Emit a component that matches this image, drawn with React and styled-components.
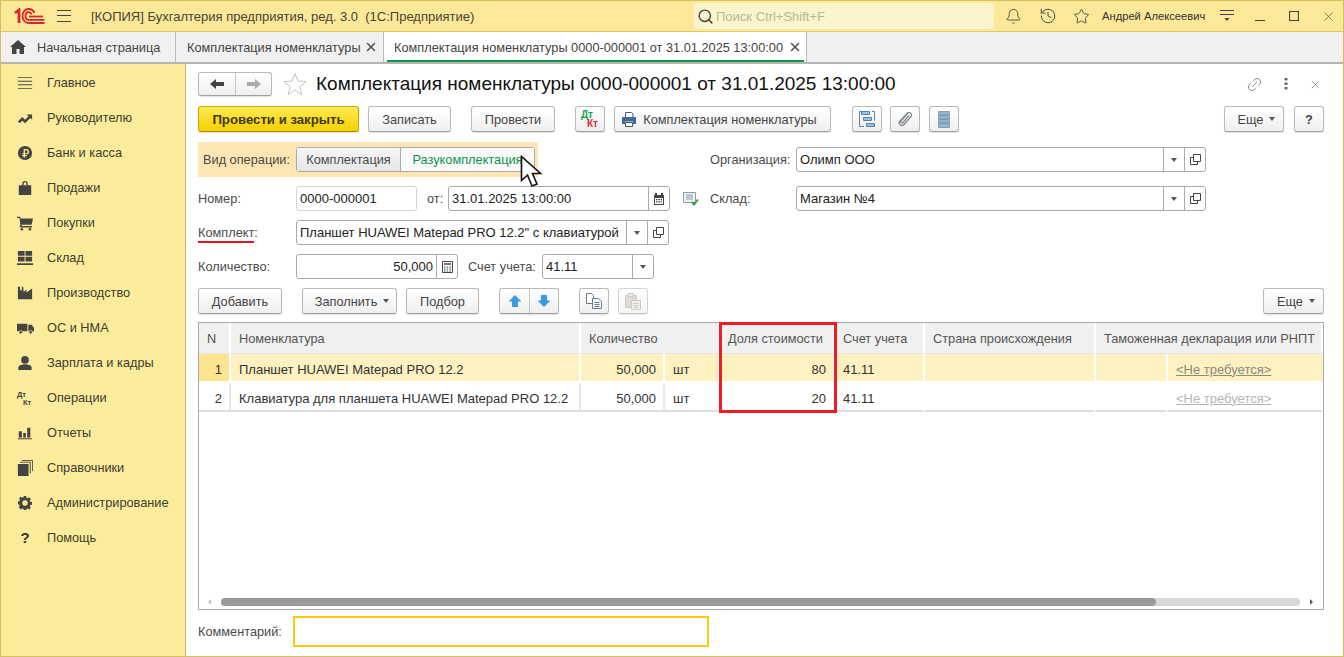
import React from 'react'
import styled, { createGlobalStyle } from 'styled-components'
import { Bell, History, Star, Link2, X, Search } from 'lucide-react'

const GlobalStyle = createGlobalStyle`
  html, body { margin: 0; padding: 0; overflow: hidden; }
  body { font-family: "Liberation Sans", Arial, sans-serif; font-size: 12.75px; color: #333; }
  * { box-sizing: border-box; }
`

const Win = styled.div`
  width: 1344px; height: 657px; display: flex; flex-direction: column;
  border: 1px solid #d6c05c; border-top: 0; background: #fff; position: relative; overflow: hidden;
`
const TitleBar = styled.div`
  height: 32px; flex: none; background: #fbe999; display: flex; align-items: center;
  border-top: 1px solid #d6c05c; border-bottom: 1px solid #dcc96c; position: relative;
`
const LogoBox = styled.div` margin-left: 13px; width: 31px; height: 16px; display: flex; `
const Burger = styled.div`
  margin-left: 12px; width: 14px; height: 12px;
  border-top: 1px solid #444; border-bottom: 1px solid #444; position: relative;
  &::after { content: ""; position: absolute; left: 0; right: 0; top: 4px; height: 1px; background: #444; }
`
const AppTitle = styled.div` margin-left: 20px; width: 603px; font-size: 13px; color: #4b4232; white-space: pre; `
const SearchBox = styled.div`
  width: 300px; height: 26px; background: #fcf4cb; border-radius: 3px; display: flex; align-items: center;
  padding-left: 3px; gap: 2px; color: #bbb59a; font-size: 13px;
`
const TopIcon = styled.div`
  width: ${p => p.$w || 34}px; display: flex; justify-content: center; color: #4a4a44; flex: none;
`
const UserName = styled.div` font-size: 11.2px; color: #333; margin-left: 3px; width: 103px; white-space: nowrap; flex: none; `
const TabBar = styled.div`
  height: 32px; flex: none; background: #f0f0f0; display: flex; border-bottom: 2px solid #b5b5b5;
`
const Tab = styled.div`
  width: ${p => p.$w}px; flex: none; display: flex; align-items: center; padding-left: ${p => p.$pad}px;
  border-right: 1px solid #bdbdbd; background: ${p => p.$active ? '#fff' : 'transparent'};
  color: #444; position: relative; white-space: nowrap;
  ${p => p.$active && `&::after { content: ""; position: absolute; left: 3px; right: 2px; bottom: 0; height: 2px; background: #10934a; }`}
`
const TabClose = styled.span` position: absolute; right: ${p => p.$r}px; top: 8px; display: flex; color: #555; `
const Body = styled.div` flex: 1; display: flex; min-height: 0; `
const Sidebar = styled.nav`
  width: 185px; flex: none; background: #fbec9b; border-right: 1px solid #c8b765; padding-top: 1px;
`
const NavItem = styled.div`
  height: 35px; display: flex; align-items: center; color: #403c30;
`
const NavIcon = styled.div` width: 46px; display: flex; justify-content: center; padding-left: 2px; color: #444; flex: none; `
const Content = styled.main`
  flex: 1; position: relative; padding: 8px 19px 0 12px; display: flex; flex-direction: column; min-width: 0;
`
const Header = styled.div` height: 24px; display: flex; align-items: center; `
const Title = styled.h1` margin: 0 0 0 9px; font-weight: 400; font-size: 19px; color: #111; white-space: nowrap; flex: 1; `
const BtnGroup = styled.div`
  display: flex; height: ${p => p.$h || 26}px; border: 1px solid #b9b9b9; border-bottom-color: #a0a0a0; border-radius: 3px;
  background: linear-gradient(#fff, #efefef); box-shadow: 0 1px 1px rgba(0,0,0,.12); flex: none;
  margin-left: ${p => p.$ml || 0}px;
`
const GroupCell = styled.div`
  width: ${p => p.$w}px; display: flex; align-items: center; justify-content: center;
  & + & { border-left: 1px solid #c6c6c6; }
`
const Toolbar = styled.div` display: flex; height: 26px; margin-top: ${p => p.$mt}px; flex: none; `
const Btn = styled.div`
  width: ${p => p.$w}px; height: 26px; flex: none; margin-left: ${p => p.$ml || 0}px;
  padding: 0 ${p => p.$pr || 0}px 0 ${p => p.$pl || 0}px;
  display: flex; align-items: center; justify-content: center; gap: 6px; white-space: nowrap;
  border: 1px solid ${p => p.$primary ? '#c9a800' : '#b9b9b9'}; border-bottom-color: ${p => p.$primary ? '#a88c00' : '#a0a0a0'}; border-radius: 3px;
  background: ${p => p.$primary ? 'linear-gradient(#ffea55, #f5d000)' : 'linear-gradient(#fff, #efefef)'};
  box-shadow: 0 1px 1px rgba(0,0,0,.12); color: ${p => p.$primary ? '#3f3a10' : '#444'};
  font-weight: ${p => p.$primary ? 700 : 400};
  font-size: ${p => p.$primary ? '13.2px' : 'inherit'};
  opacity: ${p => p.$off ? .6 : 1};
`
const Caret = styled.span`
  display: inline-block; width: 0; height: 0; border: 3px solid transparent; border-top: 4px solid #555; border-bottom: 0;
`
const Row = styled.div` display: flex; align-items: center; height: 25px; margin-top: ${p => p.$mt}px; flex: none; `
const LeftCol = styled.div` width: 512px; display: flex; align-items: center; flex: none; height: 100%; `
const Label = styled.span`
  width: ${p => p.$w || 98}px; flex: none; color: #4a4a4a; white-space: nowrap; margin-left: ${p => p.$ml || 0}px;
`
const RedLabel = styled(Label)`
  span { border-bottom: 2px solid #e8141c; padding-bottom: 1px; }
`
const Field = styled.div`
  width: ${p => p.$w}px; height: 25px; flex: none; display: flex; border: 1px solid ${p => p.$soft ? '#d4d4d4' : '#aaa'}; border-radius: 3px;
  background: #fff; color: #222; font-size: 13px;
`
const FieldText = styled.div`
  flex: 1; padding: 0 3px; display: flex; align-items: center; white-space: nowrap; min-width: 0; overflow: hidden;
  justify-content: ${p => p.$right ? 'flex-end' : 'flex-start'};
`
const FieldBtn = styled.div`
  width: 21px; flex: none; border-left: 1px solid #aaa; display: flex; align-items: center; justify-content: center; color: #444;
`
const Highlight = styled.div`
  margin-top: 10px; height: 35px; width: 340px; background: #fde5b4; display: flex; align-items: center;
  padding-left: 5px; flex: none;
`
const TopRow = styled.div` display: flex; align-items: flex-start; flex: none; `
const OrgWrap = styled.div` display: flex; align-items: center; margin: 15px 0 0 172px; `
const Toggle = styled.div`
  width: 239px; height: 25px; display: flex; border: 1px solid #aaa; border-radius: 3px; margin-left: 5px;
  background: linear-gradient(#fff, #f1f1f1);
`
const ToggleCell = styled.div`
  display: flex; align-items: center; justify-content: center; width: ${p => p.$w}px;
  color: ${p => p.$on ? '#0b9250' : '#4a4a4a'}; background: ${p => p.$on ? '#fafafa' : 'linear-gradient(#f6f6f6, #e6e6e6)'};
  & + & { border-left: 1px solid #aaa; }
`
const TableBox = styled.div`
  margin-top: 8px; height: 288px; flex: none; border: 1px solid #a8a8a8; position: relative; background: #fff;
  display: flex; flex-direction: column;
`
const Grid = styled.div`
  display: grid; grid-template-columns: 32px 350px 84px 55px 115px 90px 171px 72px 1fr; grid-auto-rows: auto;
`
const Head = styled.div`
  grid-column: span ${p => p.$span || 1}; height: 31px; background: #f0f0f0; border-right: 2px solid #fff; border-bottom: 1px solid #e4e4e4;
  display: flex; align-items: center; padding-left: 8px; color: #555; white-space: nowrap; overflow: hidden;
`
const Cell = styled.div`
  height: 29px; display: flex; align-items: center; padding: 3px ${p => p.$right ? 7 : 8}px 0 8px; white-space: nowrap; color: #333; font-size: 13px;
  background: ${p => p.$num && p.$sel ? '#ffe48f' : p.$sel ? '#fdf1c2' : '#fff'};
  border-right: 2px solid ${p => p.$line ? (p.$sel ? '#fff' : '#e6e6e6') : 'transparent'};
  border-bottom: 2px solid ${p => p.$sel ? '#fff' : '#dedede'};
  justify-content: ${p => p.$right ? 'flex-end' : 'flex-start'};
`
const NotNeeded = styled.a`
  color: ${p => p.$sel ? '#8a8a80' : '#b5b5b5'}; text-decoration: underline;
`
const ScrollRow = styled.div`
  margin-top: auto; height: 14px; display: flex; align-items: center; padding: 0 10px 0 9px; gap: 10px; flex: none;
`
const Track = styled.div` flex: 1; height: 8px; border-radius: 4px; background: #d8d8d8; display: flex; `
const Thumb = styled.div` width: 935px; height: 8px; border-radius: 4px; background: #9a9a9a; `
const ScrollArrow = styled.span`
  width: 0; height: 0; border: 3px solid transparent;
  ${p => p.$dir === 'l' ? 'border-right: 3px solid #c4c4c4; border-left: 0;' : 'border-left: 3px solid #555; border-right: 0;'}
`
const CommentRow = styled.div` display: flex; align-items: center; margin-top: 6px; flex: none; `
const CommentBox = styled.div` width: 416px; height: 31px; border: 2px solid #fdc912; `
const RedFrame = styled.div`
  position: absolute; left: 533px; top: 258px; width: 118px; height: 91px; border: 3px solid #ee1c25; pointer-events: none;
`
const Cursor = styled.svg` position: absolute; left: 334px; top: 91px; pointer-events: none; `

const DarkIcon = ({ children, size = 16 }) => (
  <svg width={size} height={size} viewBox="0 0 18 18" fill="#444">{children}</svg>
)

const navItems = [
  ['Главное', <DarkIcon><path d="M1 2.500h16v1H1zM1 6.500h16v1H1zM1 10.500h16v1H1zM1 14.500h16v1H1z" /></DarkIcon>],
  ['Руководителю', <DarkIcon><path d="M1 13l5-5 3 3 4-4-2-2h6v6l-2-2-6 6-3-3-3 3z" /></DarkIcon>],
  ['Банк и касса', <DarkIcon size={16}><circle cx="9" cy="9" r="8" /><path d="M7.500 4.500h3a2.500 2.500 0 010 6H9v.8h2v1.300H9V14H7.500v-1.400H6v-1.300h1.500v-.8H6V9.200h1.500zM9 5.800v3.400h1.300a1.700 1.700 0 000-3.400z" fill="#fbec9b" fillRule="evenodd" /></DarkIcon>],
  ['Продажи', <DarkIcon><path d="M2 6h4V4a3 3 0 016 0v2h4v11H2zM7.500 6h3V4a1.500 1.500 0 00-3 0z" fillRule="evenodd" /></DarkIcon>],
  ['Покупки', <DarkIcon><path d="M0 2h3.500l.5 2H18l-1.500 7H5.500l-.4 1.500H17V14H3l.8-3L2.800 3.500H0z" /><circle cx="5.500" cy="16" r="1.500" /><circle cx="14.500" cy="16" r="1.500" /></DarkIcon>],
  ['Склад', <DarkIcon><path d="M1 1h7.500v5.500H1zM9.500 1H17v5.500H9.500zM1 7.500h7.500V13H1zM9.500 7.500H17V13H9.500zM0 15h18v2H0z" /></DarkIcon>],
  ['Производство', <DarkIcon><path d="M1 16V2h2.500v4h2V2H7l.5 6 3-3V8.500L17 4v12z" /></DarkIcon>],
  ['ОС и НМА', <DarkIcon size={17}><path d="M0 5h11v8H0zM12 6h3.500L18 9.500V13h-6z" /><circle cx="4" cy="14" r="1.800" stroke="#fbec9b" strokeWidth=".7" /><circle cx="14.500" cy="14" r="1.800" stroke="#fbec9b" strokeWidth=".7" /></DarkIcon>],
  ['Зарплата и кадры', <DarkIcon><circle cx="9" cy="5.500" r="4.300" /><path d="M1.500 17v-2.500C1.500 11.500 6 10.500 9 10.500s7.500 1 7.500 4V17z" /></DarkIcon>],
  ['Операции', <DarkIcon size={18}><text x="1" y="8" fontSize="7.500" fontWeight="700" fill="#444" fontFamily="Liberation Sans">Дт</text><text x="7" y="15.500" fontSize="7.500" fontWeight="700" fill="#444" fontFamily="Liberation Sans">Кт</text></DarkIcon>],
  ['Отчеты', <DarkIcon><path d="M2 7h3.500v7H2zM7 9h3v5H7zM11.500 3h3.500v11h-3.500zM1 15h16v1H1z" /></DarkIcon>],
  ['Справочники', <DarkIcon><path d="M1 4.500h12V18H1z" /><path d="M3.500 2.500h11.500v12.500" fill="none" stroke="#444" /><path d="M5.500.5h12v12" fill="none" stroke="#444" /></DarkIcon>],
  ['Администрирование', <DarkIcon size={14}><path fillRule="evenodd" d="M7.500 0h3l.4 2.300 1.500.7 2-1.300 2.100 2.100-1.300 2 .7 1.500 2.100.4v3.600l-2.100.4-.7 1.500 1.300 2-2.100 2.100-2-1.300-1.500.7-.4 2.300h-3l-.4-2.300-1.500-.7-2 1.300L.9 14.500l1.300-2-.7-1.500L0 10.600V7l2-.5.7-1.500-1.300-2 2.100-2.100 2 1.300 1.500-.7zM9 5.500a3.500 3.500 0 100 7 3.500 3.500 0 000-7z" /></DarkIcon>],
  ['Помощь', <b style={{ fontSize: 15, color: '#333' }}>?</b>],
]

const Logo = () => (
  <svg width="31" height="16" viewBox="0 0 31 16" fill="none" stroke="#d8242c" strokeWidth="1.800">
    <path d="M1 5l4-3v13" strokeWidth="2.800" />
    <path d="M20.500 5C19.500 2.500 17 1 14.500 1 11 1 8.500 4 8.500 8s2.500 7 6 7h16" />
    <path d="M17.500 6.500C17 5 16 4.200 14.500 4.200 12.500 4.200 11.500 6 11.500 8s1 3.800 3 3.800h16" />
    <path d="M15 8.500h14" />
  </svg>
)
const Arrow = ({ dir, color }) => (
  <svg width="16" height="12" viewBox="0 0 16 12" fill={color}>
    <path d={dir === 'l' ? 'M1 6l6-5v3h8v4H7v3z' : 'M15 6L9 1v3H1v4h8v3z'} />
  </svg>
)
const BlueArrow = ({ up }) => (
  <svg width="14" height="14" viewBox="0 0 14 14" fill="#3a9be0" style={up ? undefined : { transform: 'rotate(180deg)' }}>
    <path d="M7 1l6.500 6.500H10V13H4V7.500H.5z" />
  </svg>
)
const Open = () => (
  <svg width="11" height="11" viewBox="0 0 11 11" fill="none" stroke="#444"><path d="M3.500.5h7v7h-7zM3.500 3.500H.5v7h7V7.500" /></svg>
)
const CopyDocs = () => (
  <svg width="16" height="16" viewBox="0 0 16 16" fill="#fff" stroke="#6f7a85">
    <path d="M.5.500h5l2 2v8h-7z" /><path d="M6.500 5.500h6l3 3v7h-9z" fill="#f4f6f8" /><path d="M8.500 9.500h5M8.500 11.500h5M8.500 13.500h5" />
  </svg>
)
const PasteDocs = () => (
  <svg width="16" height="17" viewBox="0 0 16 17" fill="#c4bcae" stroke="#a09a90" opacity=".85">
    <path d="M.5 2.500h11v12H.5z" /><path d="M3.500 .5h5v3h-5z" fill="#ddd" /><path d="M6.500 7.500h9v9h-9z" fill="#e4e6e8" /><path d="M8.500 10.500h5M8.500 12.500h5M8.500 14.500h5" fill="none" />
  </svg>
)
const Calendar = () => (
  <svg width="12" height="12" viewBox="0 0 12 12" fill="#444"><path d="M1 2h1V0h2v2h4V0h2v2h1v10H1zM2 5v6h8V5z" fillRule="evenodd" /><path d="M3 6h1.500v1.200H3zM5.300 6h1.500v1.200H5.300zM7.600 6h1.500v1.200H7.600zM3 8.300h1.500v1.200H3zM5.300 8.300h1.500v1.200H5.300zM7.600 8.300h1.500v1.200H7.600z" /></svg>
)
const Calc = () => (
  <svg width="11" height="12" viewBox="0 0 11 12" fill="none" stroke="#444"><path d="M.5.5h10v11H.5z" /><path d="M2 3h7" strokeWidth="1.500" /><path d="M2 6h1.500M4.700 6h1.500M7.500 6H9M2 8h1.500M4.700 8h1.500M7.500 8H9M2 10h1.500M4.700 10h1.500M7.500 10H9" /></svg>
)
const DtKt = () => (
  <svg width="20" height="20" viewBox="0 0 20 20"><text x="1" y="9" fontSize="10" fontWeight="700" fill="#12a050" fontFamily="Liberation Sans">Дт</text><text x="7" y="18" fontSize="10" fontWeight="700" fill="#e0242c" fontFamily="Liberation Sans">Кт</text></svg>
)
const Printer = () => (
  <svg width="16" height="15" viewBox="0 0 16 15"><path d="M4.500.5h6l1.500 1.500v4h-7.500z" fill="#fff" stroke="#445a70" /><path d="M1 6a1 1 0 011-1h12a1 1 0 011 1v6h-3V9.500H4V12H1z" fill="#3f6a96" /><path d="M4.500 10.500h7v4h-7z" fill="#fff" stroke="#445a70" /></svg>
)
const Struct = () => (
  <svg width="16" height="16" viewBox="0 0 16 16" fill="#9cc0de" stroke="#4f83b0"><path d="M2.500.5h8v3h-8zM4.500 6.500h8v3h-8zM7.500 12.500h8v3h-8z" /><path d="M3 .5H.5v15H5M13 .5h2.500v9" fill="none" /></svg>
)
const Clip = () => (
  <svg width="16" height="18" viewBox="0 0 16 18" fill="none" stroke="#858c92" strokeWidth="1.300"><path d="M11 2.500L3 11a2.500 2.500 0 004 3.500l7-8a2.300 2.300 0 00-3.500-3L4 11a1.200 1.200 0 002 1.500l6-7" /></svg>
)
const Lines = () => (
  <svg width="12" height="17" viewBox="0 0 12 17" fill="#8fb3d0" stroke="#7a8f9f" strokeWidth=".8"><path d="M.5.500h11v3.500H.5zM.5 4.500h11V8H.5zM.5 8.500h11V12H.5zM.5 12.500h11v4H.5z" /></svg>
)
const Dots = () => (
  <svg width="4" height="12" viewBox="0 0 4 12" fill="#666"><rect x="0.500" y="0" width="3" height="2.400" /><rect x="0.500" y="4.500" width="3" height="2.400" /><rect x="0.500" y="9" width="3" height="2.400" /></svg>
)
const Posted = () => (
  <svg width="16" height="14" viewBox="0 0 16 14" fill="none"><path d="M.5.500h12v10H.5z" stroke="#8b9aa6" fill="#eef2f5" /><path d="M3 3h7M3 5h7M3 7h7" stroke="#8b9aa6" /><path d="M9 10l2 2.500 4-5" stroke="#35a04a" strokeWidth="2" /></svg>
)
const RefField = ({ w, text, open = true }) => (
  <Field $w={w}>
    <FieldText>{text}</FieldText>
    <FieldBtn><Caret /></FieldBtn>
    {open && <FieldBtn><Open /></FieldBtn>}
  </Field>
)

const rows = [
  { n: 1, name: 'Планшет HUAWEI Matepad PRO 12.2', share: 80, sel: true },
  { n: 2, name: 'Клавиатура для планшета HUAWEI Matepad PRO 12.2', share: 20, sel: false },
]

export default function App() {
  return (
    <Win>
      <GlobalStyle />
      <TitleBar>
        <LogoBox><Logo /></LogoBox>
        <Burger />
        <AppTitle>[КОПИЯ] Бухгалтерия предприятия, ред. 3.0  (1С:Предприятие)</AppTitle>
        <SearchBox><Search size={17} color="#444" />Поиск Ctrl+Shift+F</SearchBox>
        <TopIcon $w={38}><Bell size={17} strokeWidth={1.3} /></TopIcon>
        <TopIcon $w={32}><History size={18} strokeWidth={1.3} /></TopIcon>
        <TopIcon $w={35}><Star size={17} strokeWidth={1.3} /></TopIcon>
        <UserName>Андрей Алексеевич</UserName>
        <TopIcon $w={44}>
          <svg width="14" height="12" viewBox="0 0 14 12" fill="none" stroke="#444"><path d="M0 .5h14M0 4.500h14" /><path d="M4.500 8h5L7 11z" fill="#444" stroke="none" /></svg>
        </TopIcon>
        <TopIcon $w={22}><svg width="10" height="10"><path d="M0 9.500h10" stroke="#444" /></svg></TopIcon>
        <TopIcon $w={46}><svg width="10" height="10"><path d="M.5.500h9v9h-9z" fill="none" stroke="#444" strokeWidth="1.200" /></svg></TopIcon>
        <TopIcon $w={22}><X size={15} strokeWidth={1} /></TopIcon>
      </TitleBar>
      <TabBar>
        <Tab $w={175} $pad={9}>
          <svg width="16" height="14" viewBox="0 0 16 14" fill="#444" style={{ marginRight: 11 }}><path d="M8 0l8 7h-2v7H9.500V9h-3v5H2V7H0z" /></svg>
          Начальная страница
        </Tab>
        <Tab $w={208} $pad={11}>Комплектация номенклатуры<TabClose $r={5}><X size={14} strokeWidth={2.8} /></TabClose></Tab>
        <Tab $w={423} $pad={10} $active>Комплектация номенклатуры 0000-000001 от 31.01.2025 13:00:00<TabClose $r={4}><X size={14} strokeWidth={2.8} /></TabClose></Tab>
      </TabBar>
      <Body>
        <Sidebar>
          {navItems.map(([text, icon]) => (
            <NavItem key={text}><NavIcon>{icon}</NavIcon>{text}</NavItem>
          ))}
        </Sidebar>
        <Content>
          <Header>
            <BtnGroup $h={24}>
              <GroupCell $w={36}><Arrow dir="l" color="#444" /></GroupCell>
              <GroupCell $w={36}><Arrow dir="r" color="#aaa" /></GroupCell>
            </BtnGroup>
            <svg width="24" height="24" viewBox="0 0 24 24" fill="#fff" stroke="#c4c4c4" style={{ marginLeft: 11 }}><path d="M12 1.500l3 7.500 8 .6-6.200 5.100 2 7.800L12 18.200 5.200 22.500l2-7.800L1 9.600 9 9z" /></svg>
            <Title>Комплектация номенклатуры 0000-000001 от 31.01.2025 13:00:00</Title>
            <Link2 size={17} color="#888" strokeWidth={1.3} style={{ transform: 'rotate(-45deg)', marginRight: 21 }} />
            <Dots />
            <X size={13} color="#777" strokeWidth={1.2} style={{ margin: '0 2px 0 21px' }} />
          </Header>
          <Toolbar $mt={10}>
            <Btn $w={161} $primary>Провести и закрыть</Btn>
            <Btn $w={83} $ml={9}>Записать</Btn>
            <Btn $w={84} $ml={20}>Провести</Btn>
            <Btn $w={30} $ml={20}><DtKt /></Btn>
            <Btn $w={217} $ml={9} $pr={7}><Printer />Комплектация номенклатуры</Btn>
            <Btn $w={30} $ml={21}><Struct /></Btn>
            <Btn $w={30} $ml={8}><Clip /></Btn>
            <Btn $w={30} $ml={9}><Lines /></Btn>
            <Btn $w={60} $ml={265} $pl={5}>Еще <Caret /></Btn>
            <Btn $w={30} $ml={10}><b>?</b></Btn>
          </Toolbar>
          <TopRow>
            <Highlight>
              <Label $w={88}>Вид операции:</Label>
              <Toggle>
                <ToggleCell $w={103}>Комплектация</ToggleCell>
                <ToggleCell $w={134} $on>Разукомплектация</ToggleCell>
              </Toggle>
            </Highlight>
            <OrgWrap>
              <Label $w={86}>Организация:</Label>
              <RefField w={410} text="Олимп ООО" />
            </OrgWrap>
          </TopRow>
          <Row $mt={9}>
            <LeftCol>
              <Label>Номер:</Label>
              <Field $w={121} $soft><FieldText>0000-000001</FieldText></Field>
              <Label $w={21} $ml={10}>от:</Label>
              <Field $w={222}>
                <FieldText>31.01.2025 13:00:00</FieldText>
                <FieldBtn><Calendar /></FieldBtn>
              </Field>
              <span style={{ display: 'flex', marginLeft: 13 }}><Posted /></span>
            </LeftCol>
            <Label $w={86}>Склад:</Label>
            <RefField w={410} text="Магазин №4" />
          </Row>
          <Row $mt={9}>
            <RedLabel><span>Комплект</span>:</RedLabel>
            <RefField w={373} text={'Планшет HUAWEI Matepad PRO 12.2" с клавиатурой'} />
          </Row>
          <Row $mt={9}>
            <Label>Количество:</Label>
            <Field $w={162}><FieldText $right>50,000</FieldText><FieldBtn><Calc /></FieldBtn></Field>
            <Label $w={74} $ml={10}>Счет учета:</Label>
            <RefField w={112} text="41.11" open={false} />
          </Row>
          <Toolbar $mt={9}>
            <Btn $w={84}>Добавить</Btn>
            <Btn $w={95} $ml={20} $pl={5}>Заполнить <Caret /></Btn>
            <Btn $w={73} $ml={9}>Подбор</Btn>
            <BtnGroup $ml={20}>
              <GroupCell $w={29}><BlueArrow up /></GroupCell>
              <GroupCell $w={29}><BlueArrow /></GroupCell>
            </BtnGroup>
            <Btn $w={30} $ml={20}><CopyDocs /></Btn>
            <Btn $w={30} $ml={9} $off><PasteDocs /></Btn>
            <Btn $w={61} $ml={615} $pl={5}>Еще <Caret /></Btn>
          </Toolbar>
          <TableBox>
            <Grid>
              <Head>N</Head>
              <Head>Номенклатура</Head>
              <Head $span={2}>Количество</Head>
              <Head>Доля стоимости</Head>
              <Head>Счет учета</Head>
              <Head>Страна происхождения</Head>
              <Head $span={2}>Таможенная декларация или РНПТ</Head>
              {rows.map(r => (
                <React.Fragment key={r.n}>
                  <Cell $sel={r.sel} $num $right $line>{r.n}</Cell>
                  <Cell $sel={r.sel} $line>{r.name}</Cell>
                  <Cell $sel={r.sel} $right $line>50,000</Cell>
                  <Cell $sel={r.sel} $line={r.sel}>шт</Cell>
                  <Cell $sel={r.sel} $right $line={r.sel}>{r.share}</Cell>
                  <Cell $sel={r.sel} $line={r.sel}>41.11</Cell>
                  <Cell $sel={r.sel} $line={r.sel} />
                  <Cell $sel={r.sel} $line={r.sel} />
                  <Cell $sel={r.sel}><NotNeeded $sel={r.sel}>&lt;Не требуется&gt;</NotNeeded></Cell>
                </React.Fragment>
              ))}
            </Grid>
            <ScrollRow>
              <ScrollArrow $dir="l" />
              <Track><Thumb /></Track>
              <ScrollArrow $dir="r" />
            </ScrollRow>
          </TableBox>
          <CommentRow>
            <Label $w={95}>Комментарий:</Label>
            <CommentBox />
          </CommentRow>
          <RedFrame />
          <Cursor width="24" height="34" viewBox="0 0 24 34">
            <path d="M1.500 1.500v24l6-5.500 4.500 11 5-2-4.500-10.500h8z" fill="#fff" stroke="#111" strokeWidth="1.600" />
          </Cursor>
        </Content>
      </Body>
    </Win>
  )
}
